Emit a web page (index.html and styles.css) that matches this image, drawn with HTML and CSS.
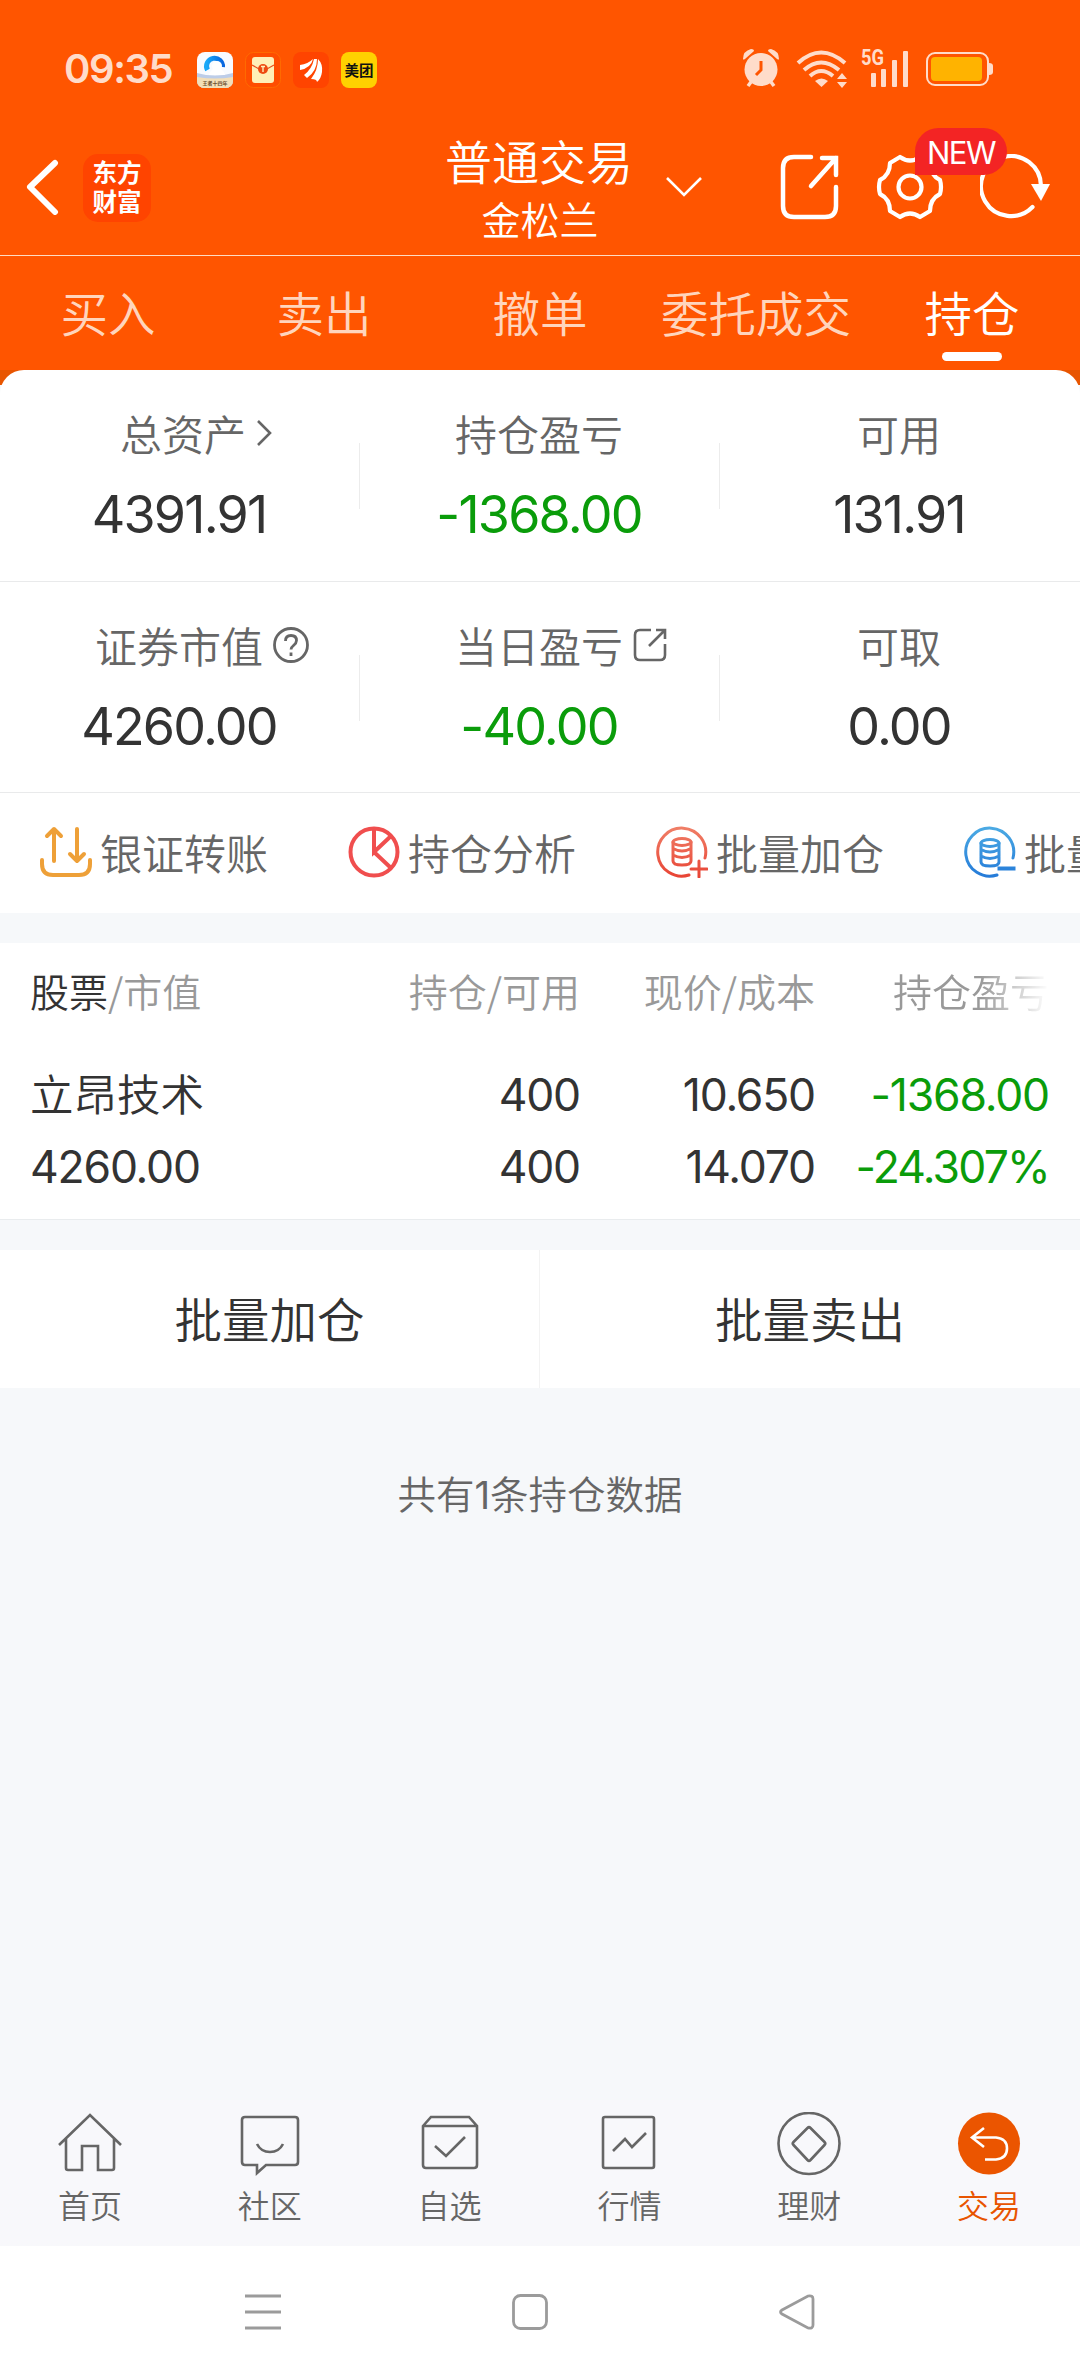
FILE: index.html
```html
<!DOCTYPE html>
<html lang="zh-CN">
<head>
    <meta charset="UTF-8">
    <meta name="viewport" content="width=device-width, initial-scale=1.0">
    <title>普通交易</title>
    <link rel="stylesheet" href="styles.css">
</head>
<body>
    <header class="top">
        <div class="status-bar">
            <span class="time">09:35</span>
            <div class="app-icons">
                <svg width="36" height="36" viewBox="0 0 36 36">
                    <defs>
                        <linearGradient id="sky" x1="0" y1="0" x2="1" y2="0"><stop offset="0" stop-color="#18a8f8"/><stop offset="1" stop-color="#0867e0"/></linearGradient>
                    </defs>
                    <rect width="36" height="36" rx="8" fill="#f8fbff"/>
                    <path d="M0 21q18 5 36 0v7q0 8-8 8H8q-8 0-8-8z" fill="#bdcde8"/>
                    <path d="M0 25q18 3 36 0v3q0 8-8 8H8q-8 0-8-8z" fill="#f3dfb8"/>
                    <path d="M10.500 18a8 8 0 1 1 15-3" fill="none" stroke="url(#sky)" stroke-width="5"/>
                    <circle cx="20" cy="14" r="5" fill="#fff"/>
                    <path d="M12 23q2-7 8-7t8 7z" fill="#fff"/>
                    <text x="18" y="33" class="tiny-text">王者十四年</text>
                </svg>
                <svg width="36" height="36" viewBox="0 0 36 36">
                    <rect x=".5" y=".5" width="35" height="35" rx="8" fill="#ff4d00" stroke="#ff6a00"/>
                    <rect x="7" y="5" width="22" height="26" rx="3" fill="#fff0b8"/>
                    <path d="M7 13l7 4h8l7-4" fill="none" stroke="#e8501a" stroke-width="1.200"/>
                    <circle cx="18" cy="17" r="5" fill="#ee4a12"/>
                    <path d="M16 14.500h4M18 14.500v5.500" stroke="#fff0b8" stroke-width="1.400"/>
                </svg>
                <svg width="36" height="36" viewBox="0 0 36 36">
                    <rect width="36" height="36" rx="8" fill="#ff4400"/>
                    <path d="M7 13Q15 12 20 7Q18 16 7 18z" fill="#fff"/>
                    <path d="M11 23Q19 17 21 7L24 7Q24 19 14 26z" fill="#fff"/>
                    <path d="M18 27Q25 18 25 7Q30 12 29 20Q28 27 24 30Q24 27 18 27z" fill="#fff"/>
                </svg>
                <span class="meituan">美团</span>
            </div>
            <div class="signals">
                <svg class="alarm" width="38" height="40" viewBox="0 0 38 40" fill="#ffdcca">
                    <circle cx="19" cy="21.500" r="16.500"/>
                    <path d="M1 11Q1 3 9 1q3 0 3 2L3 11q-2 1-2 0zM37 11Q37 3 29 1q-3 0-3 2l9 8q2 1 2 0z"/>
                    <path d="M9 34l-3 4M29 34l3 4" stroke="#ffdcca" stroke-width="3.500"/>
                    <path d="M19 13v9l-5 5" fill="none" stroke="#ff5500" stroke-width="3"/>
                </svg>
                <svg width="52" height="38" viewBox="0 0 52 38">
                    <g fill="none" stroke="#ffdcca" stroke-width="4">
                        <path d="M2 13q23-21 47 0"/>
                        <path d="M8 20q17-15 35 0"/>
                        <path d="M14 26q11-10 23 0"/>
                    </g>
                    <path d="M19 31q6.500-5 13 0l-6.500 6z" fill="#ffdcca"/>
                    <path d="M41 29h10l-5-6zM41 32h10l-5 6z" fill="#ffdcca"/>
                </svg>
                <svg class="net" width="48" height="40" viewBox="0 0 48 40" fill="#ffdcca">
                    <text x="0" y="17" class="net-text" textLength="23" lengthAdjust="spacingAndGlyphs">5G</text>
                    <rect x="10" y="25" width="5" height="14" rx="1"/>
                    <rect x="20" y="21" width="5" height="18" rx="1"/>
                    <rect x="31" y="12" width="5" height="27" rx="1"/>
                    <rect x="42" y="3" width="5" height="36" rx="1"/>
                </svg>
                <svg width="67" height="36" viewBox="0 0 67 36">
                    <rect x="1" y="2" width="61" height="32" rx="8" fill="none" stroke="#ffdcca" stroke-width="2"/>
                    <path d="M63 12q4 0 4 3v6q0 3-4 3z" fill="#ffdcca"/>
                    <rect x="5" y="6" width="51" height="24" rx="4" fill="#ffb300"/>
                </svg>
            </div>
        </div>

        <div class="title-bar">
            <svg class="back" width="34" height="56" viewBox="0 0 34 56"><path d="M30 4L5 28l25 25" fill="none" stroke="#fff" stroke-width="6" stroke-linecap="round" stroke-linejoin="round"/></svg>
            <div class="logo">东方<br>财富</div>
            <div class="account">
                <h1>普通交易</h1>
                <p>金松兰</p>
                <svg class="arrow-down" width="38" height="22" viewBox="0 0 38 22"><path d="M2 2l17 17L36 2" fill="none" stroke="#fff" stroke-width="2.600"/></svg>
            </div>
            <div class="actions">
                <svg width="60" height="66" viewBox="0 0 60 66" fill="none" stroke="#fff" stroke-width="4.500" stroke-linecap="round">
                    <path d="M31 3H14Q3 3 3 14v38q0 11 11 11h31q11 0 11-11V33"/>
                    <path d="M42 4h14v17M56 4L31 32"/>
                </svg>
                <div class="settings">
                    <svg width="68" height="66" viewBox="-34 -33 68 66" fill="none" stroke="#fff" stroke-width="4.200" stroke-linejoin="round">
                        <path d="M-10-30Q0-23 10-30L20-24Q21-11 30-7Q32 0 30 7Q20 12 20 24L10 30Q0 23-10 30L-20 24Q-20 12-30 7Q-32 0-30-7Q-20-12-20-24z"/>
                        <circle r="11.500"/>
                    </svg>
                    <span class="badge">NEW</span>
                </div>
                <svg width="72" height="66" viewBox="0 0 72 66">
                    <path d="M52.500 53A30 30 0 1 1 61 32" fill="none" stroke="#fff" stroke-width="4.200" stroke-linecap="round"/>
                    <path d="M51 30h19l-9 17z" fill="#fff"/>
                </svg>
            </div>
        </div>

        <nav class="tabs">
            <a>买入</a>
            <a>卖出</a>
            <a>撤单</a>
            <a>委托成交</a>
            <a class="active">持仓</a>
        </nav>
    </header>

    <section class="summary">
        <div class="card">
            <div class="stats">
                <div class="stat">
                    <p class="shift">总资产<svg width="16" height="28" viewBox="0 0 16 28"><path d="M2 2l12 12L2 26" fill="none" stroke="#666" stroke-width="2.600"/></svg></p>
                    <b>4391.91</b>
                </div>
                <div class="stat">
                    <p>持仓盈亏</p>
                    <b class="down">-1368.00</b>
                </div>
                <div class="stat">
                    <p>可用</p>
                    <b>131.91</b>
                </div>
            </div>
            <div class="stats">
                <div class="stat">
                    <p>证券市值<svg width="36" height="36" viewBox="0 0 36 36" fill="none" stroke="#666" stroke-width="2.800"><circle cx="18" cy="18" r="16.500"/><path d="M12.500 14q0-5.500 5.500-5.500t5.500 5q0 2.500-3 5-2.500 2-2.500 4"/><path d="M18 25.500v3.500"/></svg></p>
                    <b>4260.00</b>
                </div>
                <div class="stat">
                    <p>当日盈亏<svg width="34" height="34" viewBox="0 0 34 34" fill="none" stroke="#666" stroke-width="2.600"><path d="M18 2H7Q2 2 2 7v20q0 5 5 5h20q5 0 5-5V16"/><path d="M23 2h9v9M32 2L16 18"/></svg></p>
                    <b class="down">-40.00</b>
                </div>
                <div class="stat">
                    <p>可取</p>
                    <b>0.00</b>
                </div>
            </div>
            <div class="links">
                <a>
                    <svg width="52" height="52" viewBox="0 0 52 52" fill="none" stroke="#eea038" stroke-width="4" stroke-linecap="round" stroke-linejoin="round">
                        <path d="M2 34v4q0 11 11 11h26q11 0 11-11v-4"/>
                        <path d="M14 35V3M7 10l7-7 7 7M37 3v32M30 28l7 7 7-7"/>
                    </svg>
                    银证转账
                </a>
                <a>
                    <svg width="52" height="52" viewBox="0 0 52 52" fill="none" stroke="#f04e4e" stroke-width="4">
                        <circle cx="26" cy="26" r="23.500"/>
                        <path d="M26 3v23l17-16M26 26l17 16"/>
                    </svg>
                    持仓分析
                </a>
                <a>
                    <svg width="52" height="52" viewBox="0 0 52 52" fill="none" stroke="url(#red)" stroke-width="3" stroke-linecap="round">
                        <defs>
                            <linearGradient id="red" gradientUnits="userSpaceOnUse" x1="0" y1="0" x2="0" y2="52"><stop offset="0" stop-color="#f08068"/><stop offset="1" stop-color="#e84334"/></linearGradient>
                        </defs>
                        <path d="M49 32A24 24 0 1 0 33 49"/>
                        <ellipse cx="26" cy="16" rx="9" ry="3.500"/>
                        <path d="M17 16v19q0 4 9 4t9-4V16M17 22.500q9 5 18 0M17 29q9 5 18 0"/>
                        <path d="M35 43h16M43 35v16"/>
                    </svg>
                    批量加仓
                </a>
                <a>
                    <svg width="52" height="52" viewBox="0 0 52 52" fill="none" stroke="url(#blue)" stroke-width="3" stroke-linecap="round">
                        <defs>
                            <linearGradient id="blue" gradientUnits="userSpaceOnUse" x1="0" y1="0" x2="0" y2="52"><stop offset="0" stop-color="#4cabe4"/><stop offset="1" stop-color="#247ad8"/></linearGradient>
                        </defs>
                        <path d="M49 32A24 24 0 1 0 33 49"/>
                        <ellipse cx="26" cy="17" rx="9" ry="3.500"/>
                        <path d="M17 17v19q0 4 9 4t9-4V17M17 23.500q9 5 18 0M17 30q9 5 18 0"/>
                        <rect x="35" y="42" width="15" height="1"/>
                    </svg>
                    批量卖出
                </a>
            </div>
        </div>
    </section>

    <section class="holdings">
        <div class="row head">
            <span><em>股票</em>/市值</span>
            <span>持仓/可用</span>
            <span>现价/成本</span>
            <span class="fade">持仓盈亏</span>
        </div>
        <div class="row name-row">
            <span class="name">立昂技术</span>
            <span>400</span>
            <span>10.650</span>
            <span class="down">-1368.00</span>
        </div>
        <div class="row">
            <span>4260.00</span>
            <span>400</span>
            <span>14.070</span>
            <span class="down percent">-24.307%</span>
        </div>
    </section>

    <div class="batch">
        <button>批量加仓</button>
        <button>批量卖出</button>
    </div>

    <p class="total">共有<span>1</span>条持仓数据</p>

    <nav class="tab-bar">
        <a>
            <svg viewBox="0 0 64 64"><path d="M1 33L32 3l31 30M8 27v29q0 2 2 2h14V34h16v24h14q2 0 2-2V27"/></svg>
            首页
        </a>
        <a>
            <svg viewBox="0 0 64 64"><path d="M7 5h50q3 0 3 3v42q0 3-3 3H28l-9 8v-8H7q-3 0-3-3V8q0-3 3-3z"/><path d="M19 32q4 8 13 8t13-8"/></svg>
            社区
        </a>
        <a>
            <svg viewBox="0 0 64 64"><path d="M5 14l8-9h38l8 9v39q0 3-3 3H8q-3 0-3-3zM5 14h54M17 34l11 10 19-19"/></svg>
            自选
        </a>
        <a>
            <svg viewBox="0 0 64 64"><rect x="6" y="5" width="51" height="51" rx="2"/><path d="M16 39l12-12 7 8 14-14"/></svg>
            行情
        </a>
        <a>
            <svg viewBox="0 0 64 64"><circle cx="32" cy="31.500" r="30.500"/><path d="M30.500 16q1.500-1.500 3 0l14 14q1.500 1.500 0 3l-14 15q-1.500 1.500-3 0l-14-15q-1.500-1.500 0-3z"/></svg>
            理财
        </a>
        <a class="active">
            <svg viewBox="0 0 64 64"><circle cx="32" cy="31.500" r="31" fill="#eb5500" stroke="none"/><path d="M27 16L15 25.500 27 35M15 25.500h24q11 1 11 11t-11 11H28" stroke="#fff"/></svg>
            交易
        </a>
    </nav>

    <div class="system-nav">
        <svg viewBox="0 0 36 36"><path d="M0 2h36M0 18h36M0 34h36"/></svg>
        <svg viewBox="0 0 36 36"><rect x="1.500" y="1.500" width="33" height="33" rx="7"/></svg>
        <svg viewBox="0 0 36 36"><path d="M3 16L29 2q5-1 5 3v26q0 4-5 3L3 20q-3-2 0-4z"/></svg>
    </div>
</body>
</html>
```

FILE: styles.css
```css
* {
    box-sizing: border-box;
}

body {
    margin: 0;
    width: 1080px;
    height: 2378px;
    display: flex;
    flex-direction: column;
    overflow: hidden;
    background-color: #f6f8fa;
    color: #333;
    font-family: "Noto Sans CJK SC", sans-serif;
    font-weight: 350;
}

h1, p {
    margin: 0;
    font-weight: inherit;
}

svg {
    display: block;
    flex: none;
}

.top {
    background-color: #ff5500;
    color: white;
}

/* status bar */
.status-bar {
    height: 138px;
    padding: 50px 87px 0 64px;
    display: flex;
    align-items: flex-start;
}

.time {
    width: 133px;
    font: 600 40px/37px Inter, sans-serif;
    letter-spacing: -1.4px;
    color: #ffdcca;
}

.app-icons {
    display: flex;
    gap: 12px;
    padding-top: 2px;
}

.tiny-text {
    font-size: 5px;
    font-weight: bold;
    text-anchor: middle;
    fill: #6b5030;
}

.meituan {
    width: 36px;
    height: 36px;
    border-radius: 8px;
    background-color: #ffd100;
    color: #111;
    font-size: 14.5px;
    font-weight: bold;
    line-height: 35px;
    text-align: center;
}

.signals {
    margin-left: auto;
    display: flex;
    gap: 15px;
    align-items: center;
}

.signals .alarm {
    margin-right: 1px;
    margin-top: -2px;
}

.signals .net {
    margin: -2px 2px 0 -2px;
    overflow: visible;
}

.net-text {
    font: bold 22px Roboto, sans-serif;
}

/* title bar */
.title-bar {
    height: 118px;
    display: flex;
    position: relative;
    padding: 16px 28px 0 25px;
    border-bottom: 1px solid #ffdcc4;
}

.back {
    margin-top: 5px;
}

.logo {
    width: 68px;
    height: 68px;
    margin-left: 24px;
    padding-top: 3px;
    border-radius: 15px;
    background-color: #ff4400;
    font-size: 24.5px;
    font-weight: bold;
    line-height: 29px;
    text-align: center;
}

.account {
    position: absolute;
    left: 50%;
    top: -6px;
    width: 186px;
    margin-left: -94px;
    text-align: center;
}

.account h1 {
    margin-left: -1px;
    font-size: 47px;
    line-height: 56px;
    white-space: nowrap;
}

.account p {
    font-size: 39px;
    line-height: 61px;
    margin-left: 2px;
}

.arrow-down {
    position: absolute;
    left: 219px;
    top: 44px;
}

.actions {
    margin-left: auto;
    display: flex;
    gap: 36px;
}

.settings {
    position: relative;
    z-index: 1;
}

.badge {
    position: absolute;
    left: 39px;
    top: -26px;
    width: 92px;
    height: 47px;
    border-radius: 24px 24px 24px 0;
    background-color: #f32424;
    font: 400 31px/49px Inter, sans-serif;
    letter-spacing: -1.5px;
    text-align: center;
}

/* trade tabs */
.tabs {
    height: 114px;
    display: grid;
    grid-template-columns: repeat(5, 1fr);
}

.tabs a {
    font-size: 47.5px;
    line-height: 112px;
    text-align: center;
    color: #ffd5bd;
    white-space: nowrap;
}

.tabs .active {
    color: white;
    position: relative;
}

.tabs .active::after {
    content: "";
    position: absolute;
    left: 78px;
    bottom: 9px;
    width: 60px;
    height: 9px;
    border-radius: 5px;
    background-color: white;
}

/* assets */
.summary {
    background: linear-gradient(#e85500 15px, #f6f8fa 15px);
}

.card {
    height: 543px;
    border-radius: 24px 24px 0 0;
    background-color: white;
    overflow: hidden;
}

.stats {
    height: 211.5px;
    display: grid;
    grid-template-columns: repeat(3, 1fr);
    border-bottom: 1px solid #e9eaeb;
}

.stat {
    padding-top: 33px;
    text-align: center;
    background: linear-gradient(#ececec, #ececec) right 73px / 1px 66px no-repeat;
}

.stat:last-child {
    background: none;
}

.stat p {
    position: relative;
    left: -1px;
    width: max-content;
    margin: 0 auto;
    font-size: 42px;
    line-height: 60px;
    color: #666;
}

.stat .shift {
    left: 3px;
}

.stat p svg {
    position: absolute;
    left: calc(100% + 10px);
    top: 50%;
    transform: translateY(-50%);
}

.stat b {
    display: block;
    font: 400 52px/60px Inter, sans-serif;
    letter-spacing: -1.8px;
    margin: 22px 2px 0 0;
}

.down, .stat .down {
    color: #0a9c0a;
}

.links {
    display: flex;
    gap: 80px;
    height: 118px;
    padding-left: 40px;
    align-items: center;
}

.links a {
    display: flex;
    gap: 8px;
    align-items: center;
    white-space: nowrap;
    flex: none;
    font-size: 42px;
    line-height: 60px;
    color: #666;
}

/* holdings table */
.holdings {
    height: 277px;
    margin-top: 30px;
    padding: 18px 31px 0 30px;
    background-color: white;
    border-bottom: 1px solid #e9ecee;
}

.row {
    display: grid;
    grid-template-columns: 315px 235px 235px 234px;
    height: 72px;
    font: 400 44.5px/74px Inter, "Noto Sans CJK SC", sans-serif;
    letter-spacing: -1.2px;
    text-align: right;
}

.row span:first-child {
    text-align: left;
}

.head {
    height: 66px;
    font: 350 39px/58px "Noto Sans CJK SC", sans-serif;
    letter-spacing: 0;
    color: #999;
}

.head em {
    font-style: normal;
    color: #333;
}

.head .fade {
    -webkit-mask-image: linear-gradient(to right, #000 165px, transparent);
    mask-image: linear-gradient(to right, #000 165px, transparent);
}

.name-row {
    margin-top: 31px;
}

.row .name {
    font: 350 43.5px/70px "Noto Sans CJK SC", sans-serif;
    letter-spacing: 0;
}

.row .percent {
    letter-spacing: -1.8px;
}

/* batch buttons */
.batch {
    display: grid;
    grid-template-columns: 1fr 1fr;
    height: 138px;
    margin-top: 30px;
    background-color: white;
}

.batch button {
    border: 0;
    padding: 0 0 3px;
    background: none;
    color: #333;
    font: inherit;
    font-size: 47.5px;
}

.batch button:first-child {
    border-right: 1px solid #f3f3f3;
}

.total {
    margin-top: 74px;
    font-size: 38.5px;
    line-height: 60px;
    text-align: center;
    color: #666;
}

.total span {
    font-family: Inter, sans-serif;
    font-weight: 400;
}

/* bottom navigation */
.tab-bar {
    display: grid;
    grid-template-columns: repeat(6, 1fr);
    height: 146px;
    margin-top: auto;
    padding: 12px 1px 0 0;
    background-color: #f8f8fb;
}

.tab-bar a {
    font-size: 32px;
    line-height: 57px;
    text-align: center;
    color: #666;
}

.tab-bar svg {
    width: 64px;
    height: 64px;
    margin: 0 auto;
    fill: none;
    stroke: #666;
    stroke-width: 2.6;
}

.tab-bar .active {
    color: #e85400;
}

.system-nav {
    display: flex;
    justify-content: center;
    align-items: center;
    gap: 231px;
    height: 132px;
    padding-right: 20px;
    background-color: white;
}

.system-nav svg {
    width: 36px;
    height: 36px;
    fill: none;
    stroke: #9b9b9b;
    stroke-width: 2.8;
}
```
